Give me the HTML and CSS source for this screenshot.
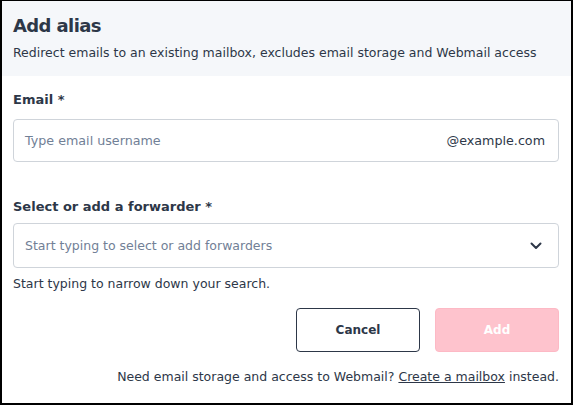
FILE: index.html
```html
<!DOCTYPE html>
<html>
<head>
<meta charset="utf-8">
<link rel="stylesheet" href="styles.css">
</head>
<body>
<div class="modal">
  <div class="header">
    <h1 class="title">Add alias</h1>
    <p class="subtitle">Redirect emails to an existing mailbox, excludes email storage and Webmail access</p>
  </div>
  <div class="body">
    <label class="label label-email">Email *</label>
    <div class="input">
      <span class="placeholder">Type email username</span>
      <span class="suffix">@example.com</span>
    </div>
    <label class="label label-fwd">Select or add a forwarder *</label>
    <div class="select">
      <span class="placeholder">Start typing to select or add forwarders</span>
      <svg class="chevron" width="12" height="8" viewBox="0 0 12 8"><path d="M1.5 1.5 L6 6 L10.5 1.5" fill="none" stroke="#2d3748" stroke-width="2" stroke-linecap="round" stroke-linejoin="round"/></svg>
    </div>
    <p class="help">Start typing to narrow down your search.</p>
    <div class="actions">
      <button class="btn btn-cancel">Cancel</button>
      <button class="btn btn-add">Add</button>
    </div>
    <p class="footer">Need email storage and access to Webmail? <a class="link">Create a mailbox</a> instead.</p>
  </div>
</div>
</body>
</html>
```
FILE: styles.css
```css
html, body {
  margin: 0;
  padding: 0;
  background: #ffffff;
}
body {
  font-family: "DejaVu Sans", sans-serif;
  color: #2d3748;
}
.modal {
  box-sizing: border-box;
  width: 573px;
  height: 405px;
  border: 2px solid #000000;
  border-top-width: 1px;
  display: flex;
  flex-direction: column;
}
.header {
  background: #f5f7fa;
  height: 75px;
  box-sizing: border-box;
  padding: 14px 11px 0 11px;
}
.title {
  margin: 0;
  font-size: 18px;
  line-height: 22px;
  letter-spacing: -0.6px;
  font-weight: 700;
  color: #2d3748;
}
.subtitle {
  margin: 8px 0 0 0;
  font-size: 12.5px;
  line-height: 16px;
  color: #2d3748;
}
.body {
  padding: 0 12px 0 11px;
  display: flex;
  flex-direction: column;
}
.label {
  display: block;
  font-size: 13px;
  line-height: 18px;
  font-weight: 700;
}
.label-email {
  margin-top: 15px;
}
.input {
  margin-top: 10px;
  box-sizing: border-box;
  height: 43px;
  border: 1px solid #cfd4da;
  border-radius: 4px;
  display: flex;
  align-items: center;
  justify-content: space-between;
  padding: 0 13px 0 11px;
  font-size: 12.7px;
}
.placeholder {
  color: #718096;
}
.suffix {
  color: #2d3748;
}
.label-fwd {
  margin-top: 36px;
}
.select {
  margin-top: 7px;
  box-sizing: border-box;
  height: 45px;
  border: 1px solid #cfd4da;
  border-radius: 4px;
  display: flex;
  align-items: center;
  justify-content: space-between;
  padding: 0 16px 0 11px;
  font-size: 12.5px;
}
.help {
  margin: 8px 0 0 0;
  font-size: 12.5px;
  line-height: 16px;
}
.actions {
  margin-top: 16px;
  display: flex;
  justify-content: flex-end;
  gap: 15px;
}
.btn {
  box-sizing: border-box;
  width: 124px;
  height: 44px;
  border-radius: 4px;
  font-family: inherit;
  font-size: 12px;
  font-weight: 700;
}
.btn-cancel {
  background: #ffffff;
  border: 1px solid #2d3748;
  color: #2d3748;
}
.btn-add {
  background: #fec3cd;
  border: 1px solid #fdb9c5;
  color: #ffffff;
}
.footer {
  margin: 17px 0 0 0;
  text-align: right;
  font-size: 12.5px;
  line-height: 16px;
}
.link {
  color: #2d3748;
  text-decoration: underline;
}
```
